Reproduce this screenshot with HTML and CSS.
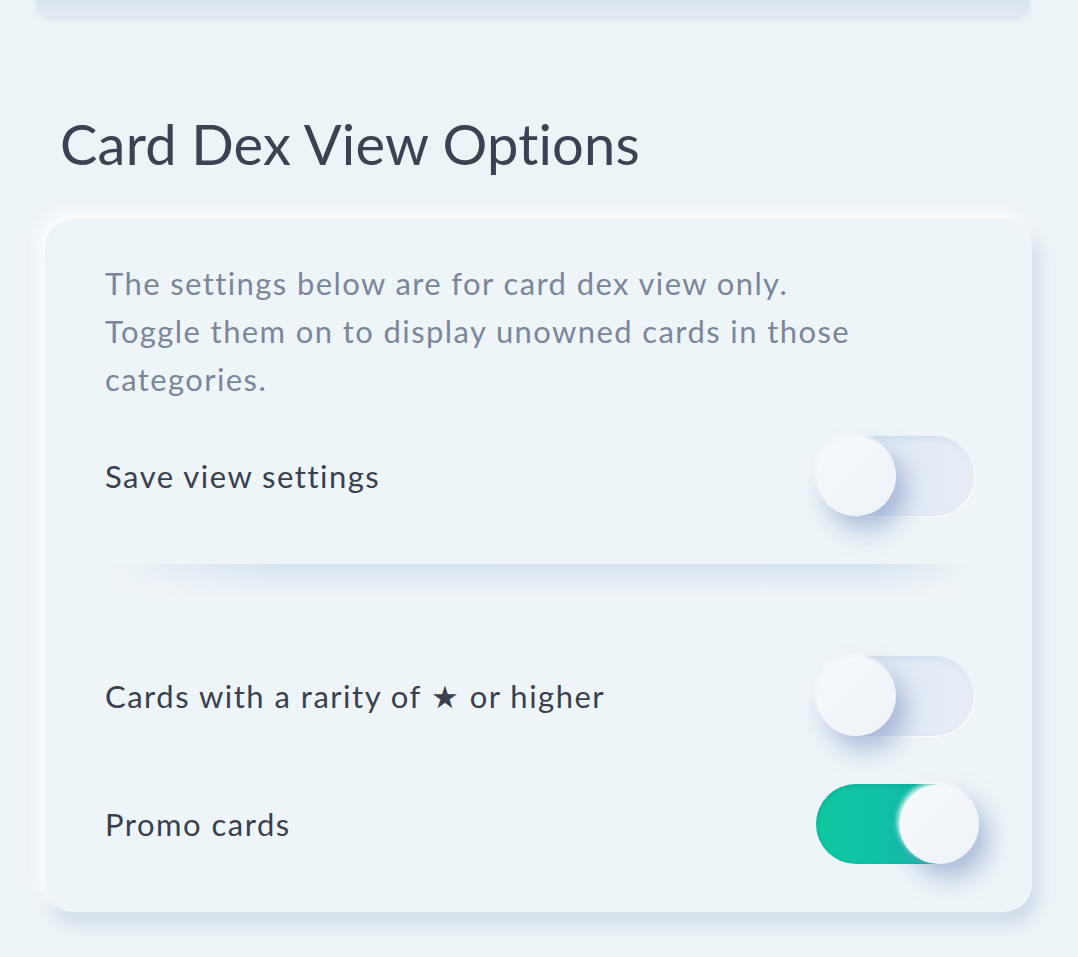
FILE: index.html
```html
<!DOCTYPE html>
<html lang="en">
<head>
    <meta charset="UTF-8">
    <meta name="viewport" content="width=device-width, initial-scale=1.0">
    <title>Card Dex View Options</title>
    <link rel="stylesheet" href="styles.css">
</head>
<body>

    <!-- bottom edge of the previous settings card -->
    <div class="prev-card"></div>

    <div class="section">
        <h2 class="section-title">Card Dex View Options</h2>

        <div class="card">
            <div class="sub-panel">
                <p class="intro">The settings below are for card dex view only. Toggle them on to display unowned cards in those categories.</p>

                <div class="row">
                    <span class="label">Save view settings</span>
                    <label class="switch">
                        <input type="checkbox">
                        <span class="track"><span class="knob"></span></span>
                    </label>
                </div>
            </div>

            <div class="divider"></div>

            <div class="rows">
                <div class="row">
                    <span class="label">Cards with a rarity of ★ or higher</span>
                    <label class="switch">
                        <input type="checkbox">
                        <span class="track"><span class="knob"></span></span>
                    </label>
                </div>
                <div class="row">
                    <span class="label">Promo cards</span>
                    <label class="switch">
                        <input type="checkbox" checked>
                        <span class="track"><span class="knob"></span></span>
                    </label>
                </div>
            </div>
        </div>
    </div>

</body>
</html>
```
FILE: styles.css
```css
body {
    font-family: Lato, "Open Sans", sans-serif;
    background-color: #edf4f8;
    margin: 0;
    padding: 0;
    color: #3a404c;
}

/* Previous card peeking in at the top */
.prev-card {
    height: 16px;
    margin: 0 48px 0 36px;
    background: linear-gradient(180deg, #d9e3ec 0%, #e3ebf2 100%);
    border-radius: 0 0 20px 20px;
    box-shadow: 0 3px 6px rgba(200, 212, 226, 0.6);
}

.section {
    padding: 0 46px 36px 45px;
}

.section-title {
    margin: 94px 0 0 15px;
    font-size: 56px;
    font-weight: 400;
    line-height: 68px;
    color: #3b4350;
    letter-spacing: 0.2px;
}

/* Main card */
.card {
    margin-top: 41px;
    padding: 40px 58px 48px 60px;
    background-color: #eef5f9;
    border-radius: 28px;
    box-shadow: -6px -6px 14px rgba(255, 255, 255, 0.9),
                6px 12px 16px rgba(186, 200, 220, 0.6);
}

.intro {
    margin: 0;
    font-size: 31px;
    line-height: 48px;
    letter-spacing: 1.4px;
    color: #7b8799;
    max-width: 770px;
}

.row {
    display: flex;
    justify-content: space-between;
    align-items: center;
    height: 80px;
}

.sub-panel .row {
    margin-top: 33px;
}

.label {
    font-size: 31px;
    letter-spacing: 1.5px;
    color: #3a404c;
}

/* soft groove under the first block */
.divider {
    height: 36px;
    margin: 48px 0 0 0;
    background: linear-gradient(180deg, rgba(214, 225, 237, 0.95) 0%, rgba(228, 236, 245, 0.6) 60%, rgba(238, 245, 249, 0) 100%);
    -webkit-mask-image: linear-gradient(90deg, transparent 0%, #000 20%, #000 88%, transparent 100%);
}

.rows {
    margin-top: 56px;
    display: flex;
    flex-direction: column;
    gap: 48px;
}

/* Toggle switch */
.switch {
    position: relative;
    display: block;
    width: 158px;
    height: 80px;
    cursor: pointer;
}

.switch input {
    display: none;
}

.track {
    display: block;
    width: 100%;
    height: 100%;
    border-radius: 40px;
    background: linear-gradient(90deg, #dde6f3 0%, #e7eef7 100%);
    box-shadow: inset 3px 3px 6px rgba(200, 212, 232, 0.6),
                1px 1px 1px rgba(255, 255, 255, 0.9);
}

.knob {
    position: absolute;
    top: 0;
    left: 0;
    width: 80px;
    height: 80px;
    border-radius: 50%;
    background: linear-gradient(135deg, #f6f9fc 0%, #eef3f9 100%);
    box-shadow: 10px 14px 24px rgba(110, 132, 188, 0.5),
                -2px -2px 4px rgba(255, 255, 255, 0.8);
}

.switch input:checked + .track {
    background: linear-gradient(90deg, #0fc8a1 0%, #12b5ab 100%);
    box-shadow: inset 2px 2px 4px rgba(0, 120, 110, 0.2);
}

.switch input:checked + .track .knob {
    left: 83px;
}
```
